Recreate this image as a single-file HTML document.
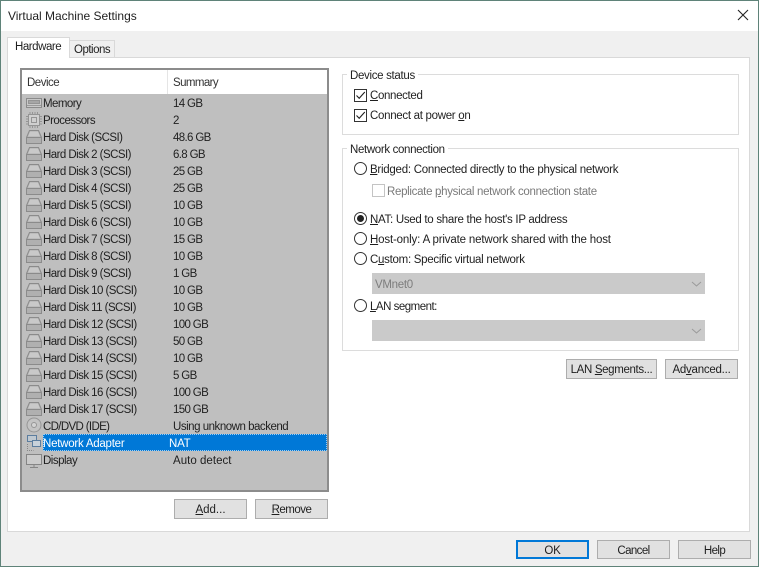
<!DOCTYPE html>
<html><head><meta charset="utf-8"><style>
html,body{margin:0;padding:0}
body{width:759px;height:567px;position:relative;overflow:hidden;background:#f0f0f0;font:11.5px/18px "Liberation Sans",sans-serif;letter-spacing:-.24px;color:#1f1f1f}
.a,.t,.b{position:absolute;box-sizing:border-box}
.t{white-space:nowrap;height:16px;line-height:18px}
u{text-decoration:underline}
.b{background:#e1e1e1;border:1px solid #adadad;text-align:center;line-height:20px;height:20px;white-space:nowrap}
.g{border:1px solid #dcdcdc}
.l{background:#fff;padding:0 3px;height:14px;line-height:16px;white-space:nowrap}
.c{width:13px;height:13px;border:1px solid #333;background:#fff}
svg{position:absolute;overflow:visible}
.d{left:43px;letter-spacing:-.55px}.s{left:173px;letter-spacing:-.65px}
</style></head><body>
<div class="a" style="left:0;top:0;width:759px;height:567px;border:1px solid #5f8379;z-index:9;pointer-events:none"></div>
<div class="a" style="left:0;top:0;width:759px;height:31px;background:#fff"></div>
<div class="t" style="left:8px;top:8px;font-size:12px;letter-spacing:-.02px;line-height:17px">Virtual Machine Settings</div>
<svg style="left:737px;top:9px" width="12" height="12"><path d="M1 1L11 11M11 1L1 11" stroke="#222" stroke-width="1.1" fill="none"/></svg>

<div class="a" style="left:7px;top:57px;width:743px;height:475px;background:#fff;border:1px solid #d9d9d9"></div>
<div class="a" style="left:69px;top:40px;width:46px;height:18px;background:#f0f0f0;border:1px solid #d9d9d9"></div>
<div class="t" style="left:74px;top:41px;letter-spacing:-.5px">Options</div>
<div class="a" style="left:7px;top:37px;width:63px;height:21px;background:#fff;border:1px solid #d9d9d9;border-bottom:0"></div>
<div class="t" style="left:15px;top:38px;letter-spacing:-.45px">Hardware</div>

<div class="a" style="left:20px;top:68px;width:309px;height:424px;background:#bfbfbf;border:2px solid #8c8c8c"></div>
<div class="a" style="left:22px;top:70px;width:305px;height:24px;background:#fff"></div>
<div class="a" style="left:167px;top:70px;width:1px;height:24px;background:#e5e5e5"></div>
<div class="t" style="left:27px;top:74px;color:#333;letter-spacing:-.5px">Device</div>
<div class="t" style="left:173px;top:74px;color:#333;letter-spacing:-.6px">Summary</div>

<svg style="left:0;top:0" width="759" height="567" fill="none" stroke="#8b8b8b">
<defs><g id="h"><path d="M29.5 130.500h9l3 7v6h-15v-6z" fill="#b0b0b0"/><path d="M26.500 137.500h15"/><path d="M30 131.500h8l2 5h-12z" fill="#c9c9c9" stroke="none"/></g></defs>
<path d="M26.500 98.500h15v9h-15z" fill="#c8c8c8"/><path d="M28.500 100.500h11v3h-11z" fill="#a6a6a6" stroke="#949494"/><path d="M27 105.500h14" stroke="#9a9a9a"/>
<path d="M28.500 114.500h11v11h-11z" fill="#cfcfcf" stroke="#949494"/><path d="M31.500 117.500h5v5h-5z" stroke="#949494"/><path d="M30 112v2M32.500 112v2M35 112v2M37.500 112v2M30 126v2M32.500 126v2M35 126v2M37.500 126v2M26 116.500h2M26 119h2M26 121.500h2M26 124h2M40 116.500h2M40 119h2M40 121.500h2M40 124h2" stroke="#949494"/>
<use href="#h"/><use href="#h" y="17"/><use href="#h" y="34"/><use href="#h" y="51"/><use href="#h" y="68"/><use href="#h" y="85"/><use href="#h" y="102"/><use href="#h" y="119"/><use href="#h" y="136"/><use href="#h" y="153"/><use href="#h" y="170"/><use href="#h" y="187"/><use href="#h" y="204"/><use href="#h" y="221"/><use href="#h" y="238"/><use href="#h" y="255"/><use href="#h" y="272"/>
<circle cx="34" cy="425" r="7" stroke="#969696" fill="#c4c4c4"/><circle cx="34" cy="425" r="2.500" stroke="#969696" fill="#d4d4d4"/>
<path d="M26.500 454.500h15v10h-15z" fill="#cbcbcb" stroke="#858585"/><path d="M30 467.500h8M34 465v2" stroke="#858585"/>
<path d="M27.500 435.500h9v6h-9z" stroke="#5c7d9e" fill="#bfc8d0"/><path d="M32.500 440.500h8v6h-8z" stroke="#5c7d9e" fill="#c9d2da"/><path d="M27.500 444v6.500h6" stroke="#888" stroke-dasharray="1 1"/>
</svg>

<div class="t d" style="top:95px">Memory</div><div class="t s" style="top:95px">14 GB</div>
<div class="t d" style="top:112px">Processors</div><div class="t s" style="top:112px">2</div>
<div class="t d" style="top:129px">Hard Disk (SCSI)</div><div class="t s" style="top:129px">48.6 GB</div>
<div class="t d" style="top:146px">Hard Disk 2 (SCSI)</div><div class="t s" style="top:146px">6.8 GB</div>
<div class="t d" style="top:163px">Hard Disk 3 (SCSI)</div><div class="t s" style="top:163px">25 GB</div>
<div class="t d" style="top:180px">Hard Disk 4 (SCSI)</div><div class="t s" style="top:180px">25 GB</div>
<div class="t d" style="top:197px">Hard Disk 5 (SCSI)</div><div class="t s" style="top:197px">10 GB</div>
<div class="t d" style="top:214px">Hard Disk 6 (SCSI)</div><div class="t s" style="top:214px">10 GB</div>
<div class="t d" style="top:231px">Hard Disk 7 (SCSI)</div><div class="t s" style="top:231px">15 GB</div>
<div class="t d" style="top:248px">Hard Disk 8 (SCSI)</div><div class="t s" style="top:248px">10 GB</div>
<div class="t d" style="top:265px">Hard Disk 9 (SCSI)</div><div class="t s" style="top:265px">1 GB</div>
<div class="t d" style="top:282px">Hard Disk 10 (SCSI)</div><div class="t s" style="top:282px">10 GB</div>
<div class="t d" style="top:299px">Hard Disk 11 (SCSI)</div><div class="t s" style="top:299px">10 GB</div>
<div class="t d" style="top:316px">Hard Disk 12 (SCSI)</div><div class="t s" style="top:316px">100 GB</div>
<div class="t d" style="top:333px">Hard Disk 13 (SCSI)</div><div class="t s" style="top:333px">50 GB</div>
<div class="t d" style="top:350px">Hard Disk 14 (SCSI)</div><div class="t s" style="top:350px">10 GB</div>
<div class="t d" style="top:367px">Hard Disk 15 (SCSI)</div><div class="t s" style="top:367px">5 GB</div>
<div class="t d" style="top:384px">Hard Disk 16 (SCSI)</div><div class="t s" style="top:384px">100 GB</div>
<div class="t d" style="top:401px">Hard Disk 17 (SCSI)</div><div class="t s" style="top:401px">150 GB</div>
<div class="t d" style="top:418px;letter-spacing:-.65px">CD/DVD (IDE)</div><div class="t s" style="top:418px;letter-spacing:-.48px">Using unknown backend</div>
<div class="a" style="left:43px;top:434px;width:284px;height:17px;background:#0078d7;border:1px dotted #9fcdf0"></div>
<div class="t d" style="top:435px;color:#fff;letter-spacing:-.24px">Network Adapter</div><div class="t" style="left:169px;top:435px;color:#fff">NAT</div>
<div class="t d" style="top:452px;letter-spacing:-.5px">Display</div><div class="t s" style="top:452px;letter-spacing:.03px">Auto detect</div>

<div class="b" style="left:174px;top:499px;width:73px;letter-spacing:0"><u>A</u>dd...</div>
<div class="b" style="left:255px;top:499px;width:73px;letter-spacing:-.5px"><u>R</u>emove</div>

<div class="a g" style="left:342px;top:74px;width:397px;height:61px"></div>
<div class="a l t" style="left:347px;top:68px;letter-spacing:-.32px">Device status</div>
<div class="a c" style="left:354px;top:89px"></div>
<svg style="left:354px;top:89px" width="13" height="13"><path d="M2.500 6.500L5.200 9.300L10.800 3" stroke="#222" stroke-width="1.100" fill="none"/></svg>
<div class="t" style="left:370px;top:87px;letter-spacing:-.35px"><u>C</u>onnected</div>
<div class="a c" style="left:354px;top:109px"></div>
<svg style="left:354px;top:109px" width="13" height="13"><path d="M2.500 6.500L5.200 9.300L10.800 3" stroke="#222" stroke-width="1.100" fill="none"/></svg>
<div class="t" style="left:370px;top:107px;letter-spacing:-.3px">Connect at power <u>o</u>n</div>

<div class="a g" style="left:342px;top:148px;width:397px;height:203px"></div>
<div class="a l t" style="left:347px;top:142px;letter-spacing:-.35px">Network connection</div>

<svg style="left:354px;top:162px" width="13" height="13"><circle cx="6.500" cy="6.500" r="6" fill="#fff" stroke="#333"/></svg>
<div class="t" style="left:370px;top:161px;letter-spacing:-.26px"><u>B</u>ridged: Connected directly to the physical network</div>
<div class="a" style="left:372px;top:184px;width:13px;height:13px;border:1px solid #c4c4c4;background:#fff"></div>
<div class="t" style="left:387px;top:183px;color:#7a7a7a;letter-spacing:-.31px">Replicate <u>p</u>hysical network connection state</div>
<svg style="left:354px;top:212px" width="13" height="13"><circle cx="6.500" cy="6.500" r="6" fill="#fff" stroke="#333"/><circle cx="6.500" cy="6.500" r="3.500" fill="#222"/></svg>
<div class="t" style="left:370px;top:211px;letter-spacing:-.29px"><u>N</u>AT: Used to share the host's IP address</div>
<svg style="left:354px;top:232px" width="13" height="13"><circle cx="6.500" cy="6.500" r="6" fill="#fff" stroke="#333"/></svg>
<div class="t" style="left:370px;top:231px;letter-spacing:-.16px"><u>H</u>ost-only: A private network shared with the host</div>
<svg style="left:354px;top:252px" width="13" height="13"><circle cx="6.500" cy="6.500" r="6" fill="#fff" stroke="#333"/></svg>
<div class="t" style="left:370px;top:251px;letter-spacing:-.28px">C<u>u</u>stom: Specific virtual network</div>
<div class="a" style="left:372px;top:273px;width:333px;height:21px;background:#cacaca"></div>
<div class="t" style="left:375px;top:276px;color:#7d7d7d;letter-spacing:-.3px">VMnet0</div>
<svg style="left:691px;top:281px" width="11" height="6"><path d="M1 1L5.500 5L10 1" stroke="#9a9a9a" fill="none"/></svg>
<svg style="left:354px;top:299px" width="13" height="13"><circle cx="6.500" cy="6.500" r="6" fill="#fff" stroke="#333"/></svg>
<div class="t" style="left:370px;top:298px;letter-spacing:-.5px"><u>L</u>AN segment:</div>
<div class="a" style="left:372px;top:320px;width:333px;height:21px;background:#cacaca"></div>
<svg style="left:691px;top:328px" width="11" height="6"><path d="M1 1L5.500 5L10 1" stroke="#9a9a9a" fill="none"/></svg>

<div class="b" style="left:566px;top:359px;width:91px;letter-spacing:-.35px">LAN <u>S</u>egments...</div>
<div class="b" style="left:665px;top:359px;width:73px">Ad<u>v</u>anced...</div>

<div class="b" style="left:516px;top:540px;width:73px;height:19px;border:2px solid #0078d7;line-height:19px">OK</div>
<div class="b" style="left:597px;top:540px;width:73px;height:19px;line-height:21px;letter-spacing:-.6px">Cancel</div>
<div class="b" style="left:678px;top:540px;width:73px;height:19px;line-height:21px;letter-spacing:-.6px">Help</div>
</body></html>
